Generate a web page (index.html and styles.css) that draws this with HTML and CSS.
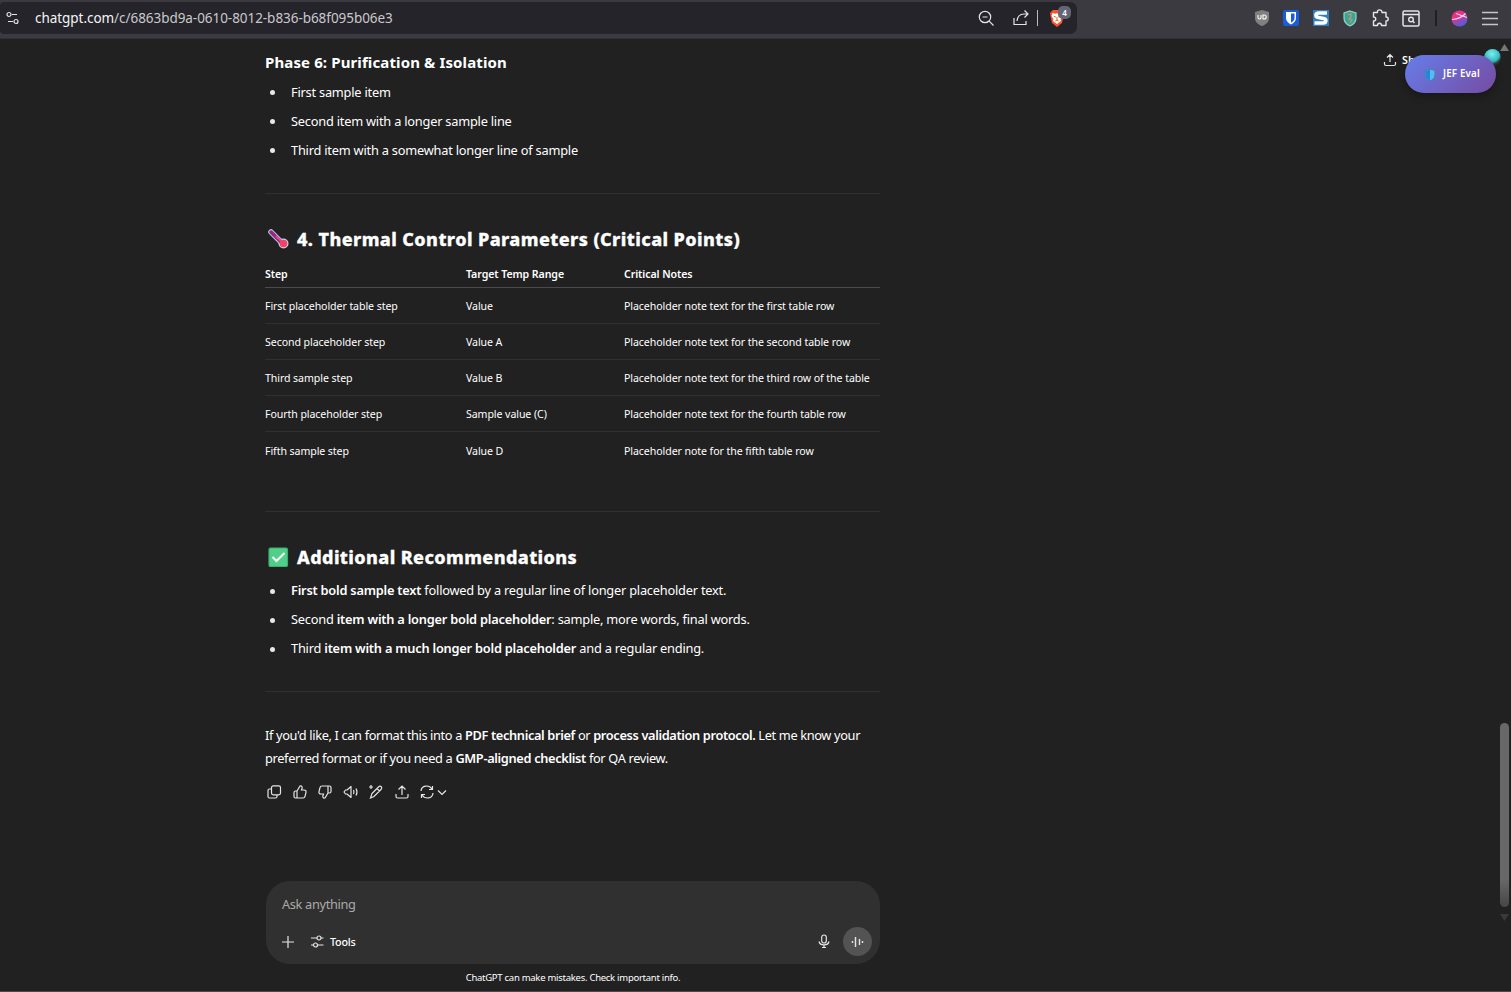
FILE: index.html
```html
<!DOCTYPE html>
<html lang="en">
<head>
<meta charset="utf-8">
<title>ChatGPT</title>
<link rel="stylesheet" href="styles.css">
</head>
<body>
<div class="window">
  <header class="toolbar">
    <div class="address">
      <svg class="tune" width="14" height="14" viewBox="0 0 14 14"><circle cx="3" cy="3.5" r="2"/><path d="M6 3.5h5M2 10.5h5"/><circle cx="10" cy="10.5" r="2"/></svg>
      <span class="url"><b>chatgpt.com</b>/c/6863bd9a-0610-8012-b836-b68f095b06e3</span>
      <div class="address-actions">
        <svg width="17" height="17" viewBox="0 0 17 17"><circle cx="7" cy="7" r="5.7"/><path d="M4.5 7h5M11.2 11.2l4.3 4.3"/></svg>
        <svg width="18" height="18" viewBox="0 0 18 18"><path d="M2 9v6.5h12V12M5 12c.5-5 3-7 7-7h4M12.500 1.500L16 5l-3.500 3.500"/></svg>
        <i class="separator"></i>
        <div class="brave">
          <svg width="16" height="19" viewBox="0 0 16 19"><path d="M4 1h8l3 3-.5 3-1.500 7L8 18l-5-4L1.500 7 1 4z" fill="#fb542b" stroke="none"/><path d="M3.500 4l3 .7L8 4.200l1.500.5 3-.7 1 3-2 3 .5 2L8 15l-4-3 .5-2-2-3z" fill="#fff" stroke="none"/><path d="M4.800 7.200l2 .8M11.200 7.200l-2 .8M8 8v3M6.300 12L8 11l1.700 1" stroke="#fb542b" stroke-width="1"/></svg>
          <span class="badge">4</span>
        </div>
      </div>
    </div>
    <div class="extensions">
      <svg width="16" height="18" viewBox="0 0 16 18"><path d="M8 1l7 2v6c0 4-3 6.500-7 8-4-1.500-7-4-7-8V3z" fill="#808080" stroke="none"/><path d="M4 6v2.500a1.500 1.500 0 0 0 3 0V6M9 6v4h1.200a2 2 0 0 0 0-4z" stroke="#fff" stroke-width="1.100"/></svg>
      <svg width="16" height="16" viewBox="0 0 16 16"><rect width="16" height="16" rx="2" fill="#175ddc" stroke="none"/><path d="M3 2h10v6c0 3-2 5-5 6.500C5 13 3 11 3 8z" fill="#fff" stroke="none"/><path d="M8 3.500h3.500V8c0 2-1.500 3.500-3.500 4.700z" fill="#175ddc" stroke="none"/></svg>
      <svg width="16" height="16" viewBox="0 0 16 16"><rect width="16" height="16" fill="#2f80bd" stroke="none"/><path d="M14 3H6C2 3 2 7 5.500 7.500l5 1c3.500.7 3 4.500-.5 4.500H1.500" stroke="#fff" stroke-width="3.500"/></svg>
      <svg width="16" height="17" viewBox="0 0 16 17"><path d="M8 1l6 2v5c0 4-2.500 6.500-6 8-3.500-1.500-6-4-6-8V3z" fill="#42a096" stroke="#8fd8c8"/><path d="M6 5l3-1v3L7 9l3 1-2 3" stroke="#b3a568"/></svg>
      <svg width="18" height="18" viewBox="0 0 18 18"><path d="M2.500 3.500h4c-1-3.500 5-3.500 4.500 0h4V8c3 0 3 4 0 4v4.500H10.500c0-3-4-3-4 0h-4V12c3 0 3-4 0-4z" stroke-linejoin="round" stroke-width="1.400"/></svg>
      <svg width="18" height="17" viewBox="0 0 18 17"><rect x="1" y="1" width="16" height="15" rx="1.500" stroke-width="1.500"/><path d="M1 4.500h16M10.500 11l2 2" stroke-width="1.500"/><circle cx="9" cy="9.500" r="2.300" stroke-width="1.400"/></svg>
      <i class="separator dark"></i>
      <svg width="17" height="17" viewBox="0 0 17 17"><defs><linearGradient id="profile" x1=".2" y1="0" x2=".7" y2="1"><stop offset=".3" stop-color="#ee2f82"/><stop offset="1" stop-color="#3f63e8"/></linearGradient></defs><circle cx="8.500" cy="8.500" r="8" fill="url(#profile)" stroke="none"/><path d="M5 3.500l11 4M1 9.500c6-.5 11-3 13.500-6" stroke="#ffd2ea"/></svg>
      <svg class="menu" width="18" height="15" viewBox="0 0 18 15"><path d="M1 1.500h16M1 7.500h16M1 13.500h16"/></svg>
    </div>
  </header>

  <main class="page">
    <article class="answer">
      <h3 class="phase">Phase 6: Purification &amp; Isolation</h3>
      <ul class="list">
        <li>First sample item</li>
        <li>Second item with a longer sample line</li>
        <li>Third item with a somewhat longer line of sample</li>
      </ul>
      <hr class="rule first">
      <h2 class="title"><svg width="21" height="20" viewBox="0 0 21 20"><path d="M3 3l12 12" stroke="#a9c9ed" stroke-width="5.500" stroke-linecap="round"/><circle cx="15.500" cy="14.500" r="5" fill="#b9d7f2" stroke="none"/><path d="M3 3l11 11" stroke="#9c2377" stroke-width="3.500" stroke-linecap="round"/><path d="M8 7l7 7" stroke="#f0449b" stroke-width="2"/><circle cx="15.500" cy="14.500" r="3.800" fill="#fb3f60" stroke="none"/></svg><span class="thermal-title">4. Thermal Control Parameters (Critical Points)</span></h2>
      <table class="data">
        <thead><tr><th class="step">Step</th><th class="range">Target Temp Range</th><th>Critical Notes</th></tr></thead>
        <tbody>
          <tr><td>First placeholder table step</td><td>Value</td><td>Placeholder note text for the first table row</td></tr>
          <tr><td>Second placeholder step</td><td>Value A</td><td>Placeholder note text for the second table row</td></tr>
          <tr><td>Third sample step</td><td>Value B</td><td>Placeholder note text for the third row of the table</td></tr>
          <tr><td>Fourth placeholder step</td><td>Sample value (C)</td><td>Placeholder note text for the fourth table row</td></tr>
          <tr><td>Fifth sample step</td><td>Value D</td><td>Placeholder note for the fifth table row</td></tr>
        </tbody>
      </table>
      <hr class="rule second">
      <h2 class="title"><svg width="21" height="20" viewBox="0 0 21 20"><rect x="1" y="1" width="18.500" height="18.500" rx="1.500" fill="#50cf89" stroke="#3fae74"/><path d="M4.500 10l4 4 8-8" stroke="#fff" stroke-width="2"/></svg><span class="recommend-title">Additional Recommendations</span></h2>
      <ul class="list recommendations">
        <li><b>First bold sample text</b> followed by a regular line of longer placeholder text.</li>
        <li>Second <b>item with a longer bold placeholder</b>: sample, more words, final words.</li>
        <li>Third <b>item with a much longer bold placeholder</b> and a regular ending.</li>
      </ul>
      <hr class="rule third">
      <p class="closing"><span class="line-one">If you'd like, I can format this into a <b>PDF technical brief</b> or <b>process validation protocol.</b> Let me know your</span><br><span class="line-two">preferred format or if you need a <b>GMP-aligned checklist</b> for QA review.</span></p>
      <div class="feedback">
        <svg width="16" height="16" viewBox="0 0 16 16"><rect x="5.500" y="1.800" width="9" height="9" rx="1.800"/><path d="M5.500 5H3.500Q2 5 2 6.500v6Q2 14 3.500 14h6q1.500 0 1.500-1.500V11"/></svg>
        <svg width="16" height="16" viewBox="0 0 16 16"><path id="thumb" d="M5 7l3-5c2-.5 2.500 1 2 2.500L9.500 6H12c1.700 0 2.300 1 2 2.300l-1 4c-.3 1.200-1 1.700-2 1.700H3.500Q2 14 2 12.500v-4Q2 7 3.500 7H5v7"/></svg>
        <svg width="16" height="16" viewBox="0 0 16 16"><use href="#thumb" transform="rotate(180 8 8)"/></svg>
        <svg width="16" height="16" viewBox="0 0 16 16"><path d="M1 8l1.500-2H4l4-3.500v11L4 10H2.500zM10.500 6q1 2 0 4M13 4.500q2 3.500 0 7" stroke-linejoin="round"/></svg>
        <svg width="16" height="16" viewBox="0 0 16 16"><path d="M4 9.500l6.500-6.500c2-2 4.500.5 2.500 2.500L6 12.500 2.500 14zM9 4.500l2.500 2.500M3 1v4M1 3h4"/></svg>
        <svg width="16" height="16" viewBox="0 0 16 16"><path d="M8 11V2M4.500 5.500L8 2l3.500 3.500M2 10v2.500Q2 14 3.500 14h9q1.500 0 1.500-1.500V10"/></svg>
        <div class="retry"><svg width="16" height="16" viewBox="0 0 16 16"><path d="M2 7C2.500 1 10 .5 13 5M13.500 2v3.500H10M14 9c-.5 6-8 6.500-11 2M2.500 14v-3.500H6"/></svg><svg width="10" height="7" viewBox="0 0 10 7"><path d="M1 1.500l4 4 4-4"/></svg></div>
      </div>
    </article>

    <section class="composer">
      <div class="prompt">Ask anything</div>
      <div class="composer-bar">
        <svg width="12" height="12" viewBox="0 0 12 12"><path d="M6 0v12M0 6h12"/></svg>
        <svg class="tools-icon" width="13" height="13" viewBox="0 0 13 13"><circle cx="8" cy="3" r="2"/><circle cx="4.500" cy="10" r="2"/><path d="M0 3h6M10 3h2.500M0 10h2.500M6.500 10h6"/></svg>
        <span class="tools">Tools</span>
        <svg class="mic" width="12" height="15" viewBox="0 0 12 15"><rect x="3.700" y="1" width="4.600" height="8" rx="2.300"/><path d="M1 7.500c1 4.500 9 4.500 10 0M6 11v2.500M4 13.500h4"/></svg>
        <span class="voice"><svg width="13" height="12" viewBox="0 0 13 12"><path d="M1.500 5v2M4.500 1v10M8.500 3v6M11.500 5v2" stroke-width="1.400"/></svg></span>
      </div>
    </section>
    <div class="disclaimer">ChatGPT can make mistakes. Check important info.</div>

    <div class="share"><svg width="14" height="14" viewBox="0 0 14 14"><path d="M7 9V1.500M4 4.500l3-3 3 3M1.500 9v2q0 1.500 1.500 1.500h8q1.500 0 1.500-1.500V9"/></svg><span>Share</span></div>
    <div class="avatar"></div>
    <div class="eval"><svg width="12" height="14" viewBox="0 0 12 14"><path d="M6 1l5 1.500V7c0 3-2 5-5 6-3-1-5-3-5-6V2.500z" fill="#55bdf6" stroke="#567dab"/><path d="M6 1.500v11c-3-1-4.500-3-4.500-5.500V3z" fill="#2386dd" stroke="none"/></svg><span>JEF Eval</span></div>
    <div class="scroll-up"></div>
    <div class="scroll-thumb"></div>
    <div class="scroll-down"></div>
  </main>
</div>
</body>
</html>
```
FILE: styles.css
```css
* { box-sizing: border-box; }
body { margin: 0; background: #212121; color: #fff; font-family: "Noto Sans", "Open Sans", sans-serif; }
svg { display: block; flex: none; fill: none; stroke: #e5e5e8; stroke-width: 1.2; }
b { font-weight: 600; }
.window { width: 1511px; height: 992px; overflow: hidden; display: flex; flex-direction: column; }
.toolbar { height: 39px; flex: none; display: flex; justify-content: space-between; background: #3b3a40; border-bottom: 1px solid #303036; }
.address { width: 1077px; height: 32px; margin-top: 2px; padding: 0 9px 0 6px; border-radius: 4px 7px 7px 4px; background: #25242a; display: flex; align-items: center; }
.url { margin-left: 15px; color: #c9c9cc; font-size: 13.5px; letter-spacing: -.05px; white-space: nowrap; }
.url b { color: #f4f4f5; font-weight: 400; }
.address-actions { margin-left: auto; display: flex; align-items: center; }
.address-actions > svg { margin-right: 17px; }
.address-actions > svg + svg { margin-right: 7px; }
.separator { width: 1px; height: 16px; background: #bbb; }
.separator.dark { width: 2px; background: #202024; margin: 0 1px; }
.brave { position: relative; width: 19px; margin-left: 11px; }
.badge { position: absolute; left: 9px; top: -3px; width: 13px; height: 13px; border-radius: 5px; background: #646575; font: 600 8px/13px "Noto Sans", sans-serif; text-align: center; }
.extensions { width: 245px; display: flex; align-items: center; justify-content: space-between; margin-right: 12px; padding-bottom: 2px; }
.menu { stroke-width: 1.6; stroke: #c6c6ca; }
.page { flex: 1; position: relative; border-bottom: 1px solid #4a4a4a; }
.answer { margin-left: 265px; width: 615px; height: 842px; padding-top: 12px; }
.phase { margin: 0; font-size: 15px; line-height: 23px; font-weight: 700; letter-spacing: .12px; }
.list { margin: 4px 0 0; padding: 0; list-style: none; font-size: 12.8px; line-height: 29px; letter-spacing: -.22px; }
.list li::before { content: ""; display: inline-block; width: 5px; height: 5px; margin: 0 16px 2px 5px; border-radius: 50%; background: #e8e8e8; vertical-align: middle; }
.rule { height: 1px; border: 0; margin: 0; background: #303030; }
.rule.first { margin-top: 28px; }
.title { height: 28px; margin: 31px 0 0; display: flex; align-items: center; font-size: 18px; line-height: 28px; font-weight: 800; white-space: nowrap; -webkit-text-stroke: .3px #fff; }
.title svg { margin: 0 8px 0 3px; }
.thermal-title { letter-spacing: .42px; }
.recommend-title { letter-spacing: .4px; }
.data { width: 615px; margin-top: 7px; border-collapse: separate; border-spacing: 0; table-layout: fixed; font-size: 10.6px; letter-spacing: -.08px; }
.data th { height: 28px; padding: 0; text-align: left; font-weight: 600; border-bottom: 1px solid #4b4b4b; }
.step { width: 201px; }
.range { width: 158px; }
.data td { height: 36.1px; padding: 0; border-bottom: 1px solid #303030; white-space: nowrap; }
.data tr:last-child td { padding-top: 1px; border: 0; }
.rule.second { margin-top: 43px; }
.recommendations { margin-top: 5px; }
.rule.third { margin-top: 28px; }
.closing { margin: 32px 0 0; font-size: 12.8px; line-height: 23px; white-space: nowrap; }
.line-one { letter-spacing: -.36px; }
.line-two { letter-spacing: -.34px; }
.feedback { height: 16px; margin-top: 14px; padding-left: 1px; display: flex; gap: 9.5px; }
.retry { display: flex; align-items: center; gap: 2px; }
.composer { width: 614px; height: 83px; margin-left: 266px; padding: 11px 8px 8px 16px; border-radius: 24px; background: #303030; }
.prompt { color: #aaa; font-size: 12.8px; line-height: 25px; letter-spacing: -.35px; }
.composer-bar { height: 29px; margin-top: 10px; display: flex; align-items: center; }
.tools-icon { margin-left: 17px; }
.tools { margin-left: 6px; font-size: 10.8px; font-weight: 500; letter-spacing: -.25px; }
.mic { margin-left: auto; margin-right: 13px; }
.voice { width: 29px; height: 29px; border-radius: 50%; background: #535353; display: flex; align-items: center; justify-content: center; }
.disclaimer { width: 614px; margin: 5px 0 0 266px; text-align: center; font-size: 9.5px; line-height: 17px; letter-spacing: -.27px; }
.share { position: absolute; left: 1383px; top: 13px; display: flex; align-items: center; gap: 5px; font-size: 10.8px; line-height: 16px; font-weight: 600; }
.avatar { position: absolute; left: 1484px; top: 10px; width: 17px; height: 17px; border-radius: 50%; background: radial-gradient(circle at 45% 30%, #7deff2, #35bcc5 50%, #333 68%); }
.eval { position: absolute; left: 1405px; top: 16px; width: 91px; height: 38px; padding: 0 15px 2px 19px; display: flex; align-items: center; gap: 7px; border-radius: 20px; background: linear-gradient(135deg, #667eea, #764ba2); box-shadow: 0 3px 9px #0005; font-size: 9.8px; font-weight: 600; letter-spacing: .15px; white-space: nowrap; }
.eval svg { position: relative; top: 2px; }
.scroll-up, .scroll-down { position: absolute; left: 1500px; width: 9px; height: 7px; background: #777; }
.scroll-up { top: 5px; clip-path: polygon(50% 0, 100% 100%, 0 100%); }
.scroll-down { top: 875px; background: #3a3a3a; clip-path: polygon(0 0, 100% 0, 50% 100%); }
.scroll-thumb { position: absolute; left: 1500px; top: 684px; width: 9px; height: 184px; border-radius: 5px; background: linear-gradient(#686868 85%, #464646); }
```
